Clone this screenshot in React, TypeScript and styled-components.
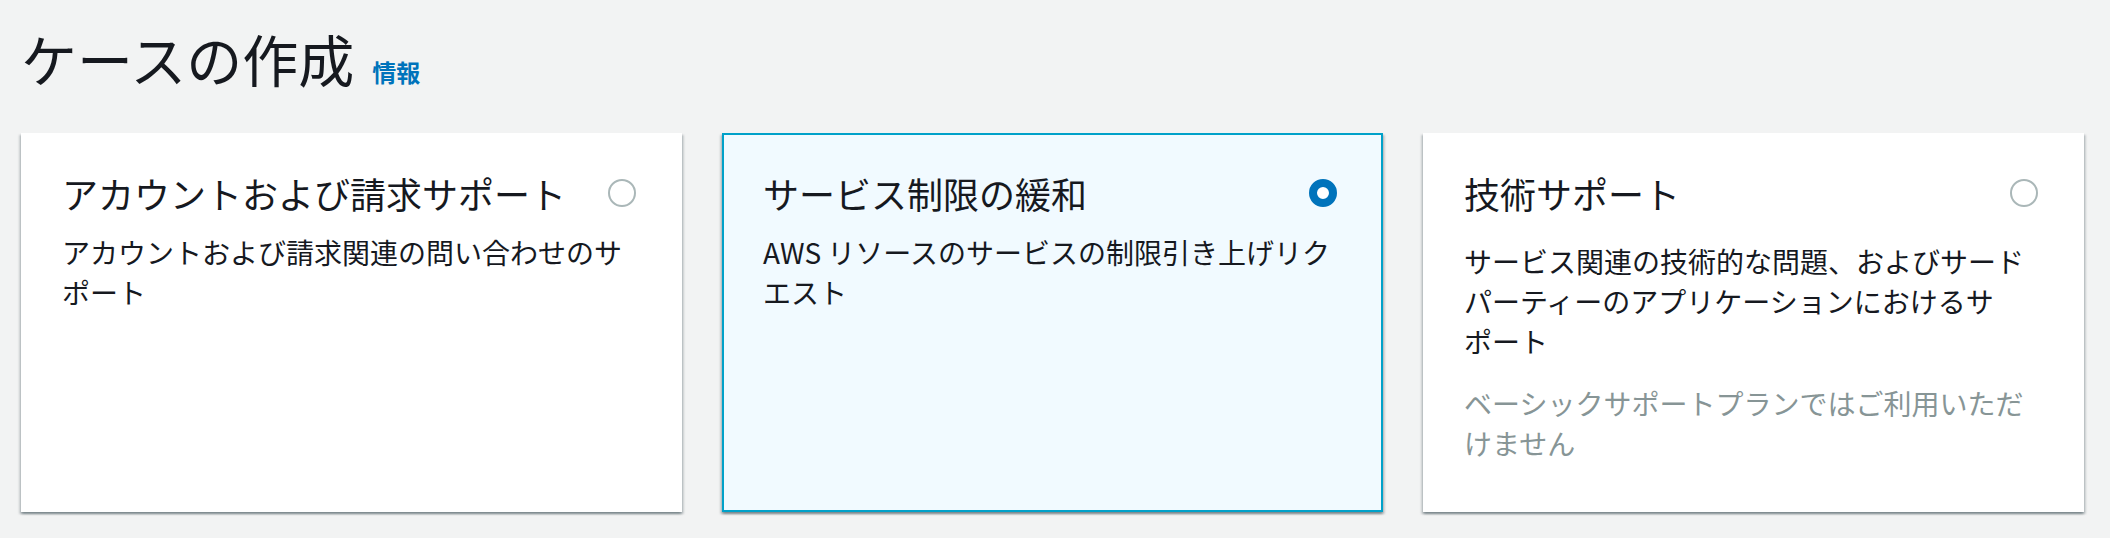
import React from "react";
import styled, { createGlobalStyle } from "styled-components";

const GlobalStyle = createGlobalStyle`
  html, body {
    margin: 0;
    padding: 0;
    background: #f2f3f3;
  }
  body {
    font-family: "Noto Sans CJK JP", "Noto Sans", sans-serif;
    color: #16191f;
  }
`;

const Page = styled.div`
  padding: 24px 26px 0 21px;
  min-height: 538px;
  box-sizing: border-box;
`;

const Header = styled.header`
  display: flex;
  align-items: baseline;
  gap: 18px;
  margin-bottom: 41px;
`;

const Heading = styled.h1`
  margin: 0;
  font-size: 56px;
  line-height: 68px;
  font-weight: 400;
  color: #16191f;
`;

const InfoLink = styled.a`
  font-size: 24px;
  line-height: 32px;
  font-weight: 700;
  color: #0073bb;
  text-decoration: none;
`;

const Grid = styled.div`
  display: grid;
  grid-template-columns: repeat(3, 1fr);
  gap: 40px;
`;

const Card = styled.div<{ $selected?: boolean }>`
  box-sizing: border-box;
  height: 379px;
  padding: 36px 44px 40px 39px;
  border: 2px solid ${(p) => (p.$selected ? "#00a1c9" : "transparent")};
  background: ${(p) => (p.$selected ? "#f1faff" : "#ffffff")};
  box-shadow: 0 2px 2px 0 rgba(0, 28, 36, 0.3), 2px 2px 2px 0 rgba(0, 28, 36, 0.15),
    -2px 2px 2px 0 rgba(0, 28, 36, 0.15);
`;

const CardHeader = styled.div`
  display: flex;
  align-items: center;
  justify-content: space-between;
`;

const CardTitle = styled.div`
  font-size: 36px;
  line-height: 44px;
  color: #16191f;
`;

const Radio = styled.span<{ $checked?: boolean }>`
  box-sizing: border-box;
  flex: none;
  width: 28px;
  height: 28px;
  border-radius: 50%;
  background: #ffffff;
  border: ${(p) => (p.$checked ? "8.5px solid #0073bb" : "2px solid #aab7b8")};
`;

const Description = styled.p<{ $gap: number }>`
  margin: ${(p) => p.$gap}px 0 0;
  font-size: 28px;
  line-height: 40px;
  line-break: strict;
  color: #16191f;
`;

const Note = styled.p`
  margin: 22px 0 0;
  font-size: 28px;
  line-height: 40px;
  line-break: strict;
  color: #879596;
`;

type Option = {
  title: string;
  description: string;
  note?: string;
  selected?: boolean;
  gap: number;
};

const options: Option[] = [
  {
    title: "アカウントおよび請求サポート",
    description: "アカウントおよび請求関連の問い合わせのサポ\u2060ー\u2060ト",
    gap: 17,
  },
  {
    title: "サービス制限の緩和",
    description: "AWS リソースのサービスの制限引き上げリクエスト",
    selected: true,
    gap: 17,
  },
  {
    title: "技術サポート",
    description:
      "サービス関連の技術的な問題、およびサードパーティーのアプリケーションにおけるサポ\u2060ー\u2060ト",
    note: "ベーシックサポートプランではご利用いただけません",
    gap: 26,
  },
];

export default function App() {
  return (
    <>
      <GlobalStyle />
      <Page lang="ja">
        <Header>
          <Heading>ケースの作成</Heading>
          <InfoLink href="#">情報</InfoLink>
        </Header>
        <Grid>
          {options.map((o) => (
            <Card key={o.title} $selected={o.selected}>
              <CardHeader>
                <CardTitle>{o.title}</CardTitle>
                <Radio $checked={o.selected} />
              </CardHeader>
              <Description $gap={o.gap}>{o.description}</Description>
              {o.note && <Note>{o.note}</Note>}
            </Card>
          ))}
        </Grid>
      </Page>
    </>
  );
}
